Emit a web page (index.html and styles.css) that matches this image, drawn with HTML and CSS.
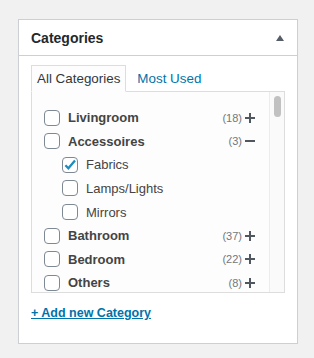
FILE: index.html
```html
<!DOCTYPE html>
<html lang="en">
<head>
    <meta charset="UTF-8">
    <meta name="viewport" content="width=device-width, initial-scale=1.0">
    <title>Categories</title>
    <link rel="stylesheet" href="styles.css">
</head>
<body>

<div class="postbox">
    <div class="postbox-header">
        <h2>Categories</h2>
        <svg class="toggle" width="8" height="6" viewBox="0 0 8 6"><polygon points="0,6 4,0 8,6" fill="#555d66"/></svg>
    </div>

    <div class="inside">
        <ul class="category-tabs">
            <li class="tab active">All Categories</li>
            <li class="tab"><a href="#">Most Used</a></li>
        </ul>

        <div class="tabs-panel">
            <ul class="cat-list">
                <li class="cat parent">
                    <span class="box"></span>
                    <span class="name">Livingroom</span>
                    <span class="count">(18)</span>
                    <svg class="expand" width="10" height="10" viewBox="0 0 10 10"><path d="M0 5h10M5 0v10" stroke="#50575e" stroke-width="2"/></svg>
                </li>
                <li class="cat parent">
                    <span class="box"></span>
                    <span class="name">Accessoires</span>
                    <span class="count">(3)</span>
                    <svg class="expand" width="10" height="10" viewBox="0 0 10 10"><path d="M0 5h10" stroke="#50575e" stroke-width="2"/></svg>
                </li>
                <li class="cat child">
                    <span class="box"><svg width="14" height="14" viewBox="0 0 14 14"><path d="M2.4 7.2l3 3.1L12 2.6" fill="none" stroke="#1e8cbe" stroke-width="2.3"/></svg></span>
                    <span class="name">Fabrics</span>
                </li>
                <li class="cat child">
                    <span class="box"></span>
                    <span class="name">Lamps/Lights</span>
                </li>
                <li class="cat child">
                    <span class="box"></span>
                    <span class="name">Mirrors</span>
                </li>
                <li class="cat parent">
                    <span class="box"></span>
                    <span class="name">Bathroom</span>
                    <span class="count">(37)</span>
                    <svg class="expand" width="10" height="10" viewBox="0 0 10 10"><path d="M0 5h10M5 0v10" stroke="#50575e" stroke-width="2"/></svg>
                </li>
                <li class="cat parent">
                    <span class="box"></span>
                    <span class="name">Bedroom</span>
                    <span class="count">(22)</span>
                    <svg class="expand" width="10" height="10" viewBox="0 0 10 10"><path d="M0 5h10M5 0v10" stroke="#50575e" stroke-width="2"/></svg>
                </li>
                <li class="cat parent">
                    <span class="box"></span>
                    <span class="name">Others</span>
                    <span class="count">(8)</span>
                    <svg class="expand" width="10" height="10" viewBox="0 0 10 10"><path d="M0 5h10M5 0v10" stroke="#50575e" stroke-width="2"/></svg>
                </li>
            </ul>
            <div class="scrollbar"><div class="thumb"></div></div>
        </div>

        <p class="add-new"><a href="#">+ Add new Category</a></p>
    </div>
</div>

</body>
</html>
```

FILE: styles.css
```css
body {
    margin: 0;
    padding: 19px 0 0 18px;
    background-color: #f1f1f1;
    font-family: "Liberation Sans", Arial, sans-serif;
    color: #444;
}
.postbox {
    width: 278px;
    background: #fff;
    border: 1px solid #ccd0d4;
    box-shadow: 0 1px 1px rgba(0, 0, 0, 0.04);
}
.postbox-header {
    height: 35px;
    border-bottom: 1px solid #ccd0d4;
    display: flex;
    align-items: center;
    justify-content: space-between;
    padding: 0 13px 0 12px;
}
.postbox-header h2 {
    margin: 0;
    font-size: 14px;
    font-weight: bold;
    color: #23282d;
}
.inside {
    padding: 9px 12px 0 12px;
}
.category-tabs {
    list-style: none;
    margin: 0 0 -1px 0;
    padding: 0;
    display: flex;
}
.tab {
    font-size: 13.4px;
    line-height: 17px;
    padding: 4px 5px 4px 5px;
    border: 1px solid transparent;
}
.tab.active {
    position: relative;
    border-color: #ddd;
    border-bottom-color: #fdfdfd;
    background: #fdfdfd;
    color: #32373c;
}
.tab + .tab {
    margin-left: 5px;
}
.tab a {
    color: #0073aa;
    text-decoration: none;
}
.tabs-panel {
    height: 200px;
    border: 1px solid #ddd;
    background: #fdfdfd;
    display: flex;
    overflow: hidden;
}
.cat-list {
    flex: 1;
    list-style: none;
    margin: 0;
    padding: 14px 0 0 12px;
}
.cat {
    display: flex;
    align-items: center;
    height: 23.57px;
    font-size: 13px;
}
.cat.child {
    padding-left: 18px;
}
.cat.parent .name {
    font-weight: bold;
}
.box {
    width: 14px;
    height: 14px;
    border: 1px solid #7e8993;
    border-radius: 4px;
    background: #fff;
    margin-right: 8px;
    display: flex;
}
.count {
    margin-left: auto;
    font-size: 11px;
    color: #72777c;
}
.expand {
    margin: 0 14px 0 3px;
}
.scrollbar {
    width: 14px;
    border-left: 1px solid #ececec;
    background: #fafafa;
    padding-top: 4px;
}
.thumb {
    width: 7px;
    height: 21px;
    margin-left: 4px;
    border-radius: 4px;
    background: #c1c1c1;
}
.add-new {
    margin: 11px 0 20px 0;
    font-size: 12.5px;
    line-height: 19px;
    font-weight: bold;
}
.add-new a {
    color: #0073aa;
}
```
